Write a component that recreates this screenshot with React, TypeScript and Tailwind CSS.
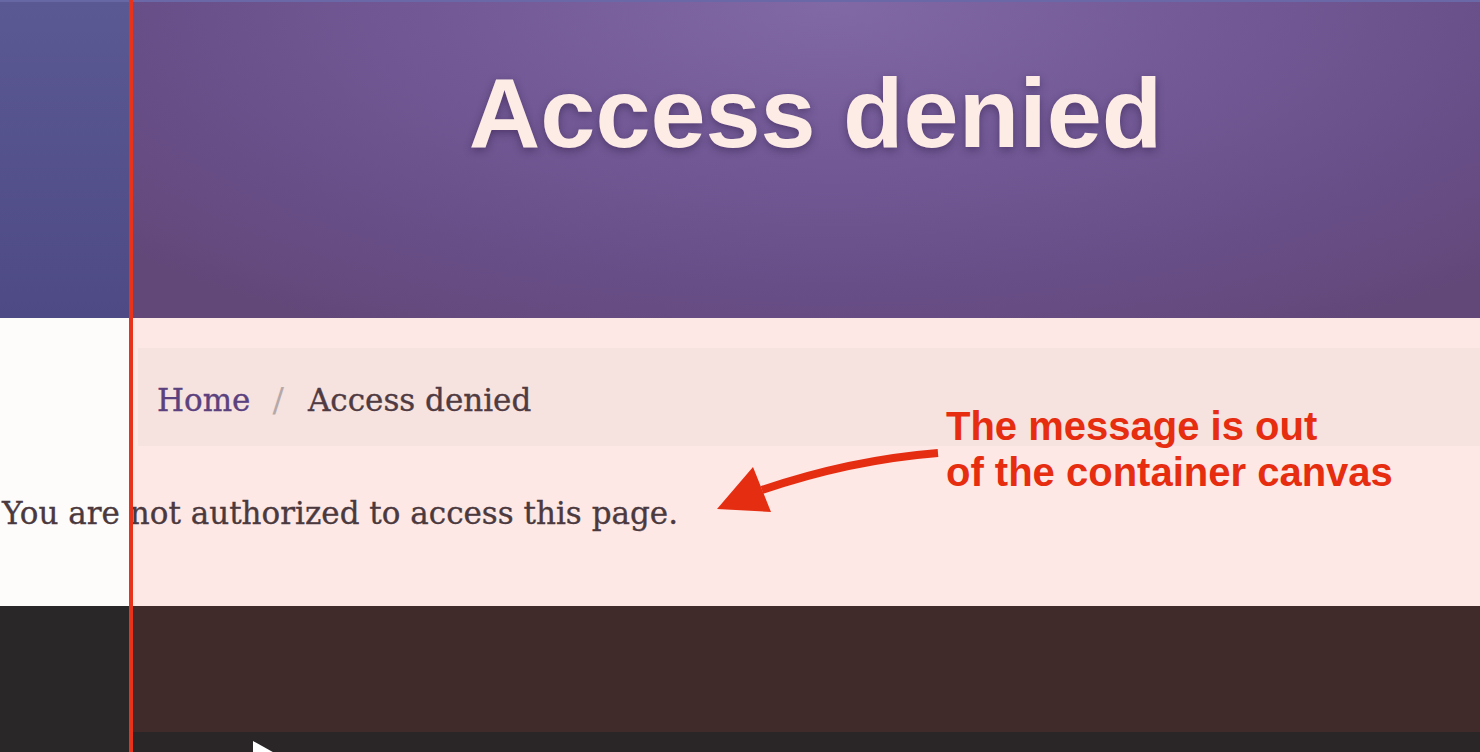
import React from "react";

export default function App() {
  return (
    <div className="relative w-[1480px] h-[752px] overflow-hidden bg-[#2a2627]">
      {/* Header */}
      <div className="flex h-[318px]">
        <div className="w-[130px] shrink-0 bg-[linear-gradient(to_bottom,#5b5994,#4d4a85)] border-t-2 border-[#6668a6]" />
        <div className="flex-1 border-t-2 border-[#6a68a6] bg-[radial-gradient(ellipse_70%_120%_at_52%_0%,#8169a6_0%,#735a97_40%,#684e87_75%,#624879_100%)]">
          <h1
            className="pt-[61px] pl-[21px] text-center text-[99px] leading-[99px] font-bold text-[#fdebe6] [text-shadow:0_3px_8px_rgba(40,20,60,0.45)]"
            style={{ fontFamily: '"Liberation Sans", Arial, sans-serif' }}
          >
            Access denied
          </h1>
        </div>
      </div>

      {/* Content */}
      <div
        className="h-[288px] bg-[linear-gradient(to_right,#fdfcfb_130px,#fde8e6_130px)] pt-[30px] [-webkit-text-stroke:0.35px_currentColor]"
        style={{ fontFamily: '"DejaVu Serif", serif' }}
      >
        <nav className="ml-[138px] flex items-center bg-[#f6e2df] h-[98px] pl-[19px] pt-[6px] text-[31px] leading-[36px]">
          <span className="text-[#5b417d]">Home</span>
          <span className="ml-[22px] mr-[24px] text-[34px] text-[#b5a8a8] [-webkit-text-stroke:0px]">/</span>
          <span className="text-[#503b42]">Access denied</span>
        </nav>
        <p className="mt-[49px] pl-[2px] text-[31px] leading-[36px] text-[#4b393e]">
          You are not authorized to access this page.
        </p>
      </div>

      {/* Footer */}
      <div className="flex h-[146px]">
        <div className="w-[130px] shrink-0 bg-[#292727]" />
        <div className="flex-1 flex flex-col">
          <div className="h-[126px] shrink-0 bg-[#412a2a]" />
          <div className="flex-1 min-h-0 bg-[#2a2627] pl-[123px] pt-[9px]">
            <svg width="40" height="40" viewBox="0 0 40 40" className="block">
              <polygon points="0,0 0,40 36,20" fill="#ffffff" />
            </svg>
          </div>
        </div>
      </div>

      {/* Annotation overlays */}
      <div className="absolute top-0 bottom-0 left-[129px] w-[4px] bg-[#e8321a]" />
      <div
        className="absolute left-[946px] top-[403px] text-[40px] leading-[46px] font-bold text-[#e62d10]"
        style={{ fontFamily: '"Liberation Sans", Arial, sans-serif' }}
      >
        The message is out
        <br />
        of the container canvas
      </div>
      <svg className="absolute left-0 top-0" width="1480" height="752" viewBox="0 0 1480 752">
        <path d="M938 453 Q 850 460 762 490" stroke="#e52d12" strokeWidth="8" fill="none" />
        <polygon points="717,509 753,467 771,512" fill="#e52d12" />
      </svg>
    </div>
  );
}
